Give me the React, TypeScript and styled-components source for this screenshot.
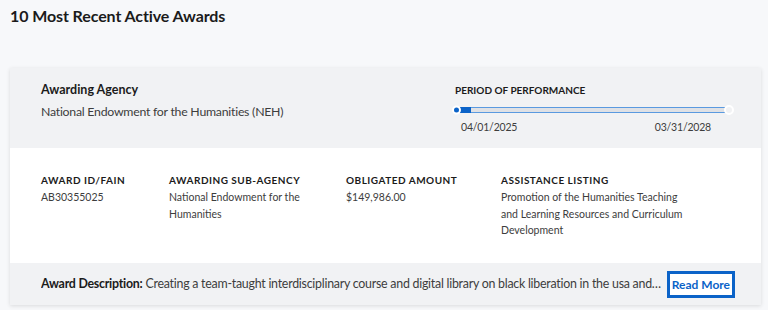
import React from 'react';
import styled, { createGlobalStyle } from 'styled-components';

const GlobalStyle = createGlobalStyle`
  body {
    margin: 0;
    background: #f7f8fa;
    font-family: 'Lato', 'Noto Sans', sans-serif;
    color: #1b1b1b;
  }
`;

const Page = styled.div`
  box-sizing: border-box;
  padding: 5px 7px 0 10px;
  width: 768px;
  height: 310px;
  overflow: hidden;
`;

const Heading = styled.h2`
  margin: 0 0 41px 0;
  line-height: 22px;
  font-size: 16px;
  font-weight: 700;
  letter-spacing: -0.1px;
  color: #1b1b1b;
`;

const Card = styled.div`
  display: flex;
  flex-direction: column;
  width: 751px;
  background: #f1f2f4;
  box-shadow: 0 1px 4px rgba(0, 0, 0, 0.12);
`;

const Top = styled.div`
  display: flex;
  justify-content: space-between;
  box-sizing: border-box;
  height: 80px;
  padding: 14px 32px 0 31px;
`;

const Label = styled.div`
  margin-bottom: 5px;
  line-height: 16px;
  font-size: 12.5px;
  font-weight: 700;
  color: #1b1b1b;
`;

const Text = styled.div`
  line-height: 18px;
  font-size: 12.3px;
  letter-spacing: -0.25px;
  color: #3d3d3d;
`;

const Period = styled.div`
  display: flex;
  flex-direction: column;
  width: 274px;
  padding-top: 1px;
`;

const SmallCaps = styled.div<{ $spaced?: boolean }>`
  line-height: 14px;
  font-size: 10px;
  font-weight: 700;
  text-transform: uppercase;
  letter-spacing: ${(p) => (p.$spaced ? '0.5px' : '0')};
  color: #1b1b1b;
`;

const Track = styled.div`
  position: relative;
  margin: 10px 0 0 0;
  height: 6px;
  border-top: 1px solid #5a9ae0;
  border-bottom: 1px solid #5a9ae0;
  background: #dfe1e5;
  box-sizing: border-box;
`;

const Fill = styled.div`
  position: absolute;
  left: 4px;
  top: -1px;
  width: 12px;
  height: 6px;
  background: #0b63c8;
`;

const Dot = styled.div<{ $end?: boolean }>`
  position: absolute;
  top: 50%;
  ${(p) => (p.$end ? 'right: -5px;' : 'left: -3px;')}
  width: ${(p) => (p.$end ? '6px' : '5px')};
  height: ${(p) => (p.$end ? '6px' : '5px')};
  transform: translateY(-50%);
  border-radius: 50%;
  background: ${(p) => (p.$end ? '#f1f2f4' : '#0b63c8')};
  border: 2px solid #ffffff;
`;

const Dates = styled.div`
  display: flex;
  justify-content: space-between;
  margin: 7px 0 0 6px;
  padding-right: 18px;
  line-height: 14px;
  font-size: 10.5px;
  letter-spacing: -0.2px;
  color: #3d3d3d;
`;

const Middle = styled.div`
  display: flex;
  box-sizing: border-box;
  height: 115px;
  padding: 25px 0 0 31px;
  background: #ffffff;
`;

const Column = styled.div<{ $w: number }>`
  display: flex;
  flex-direction: column;
  width: ${(p) => p.$w}px;
  gap: 2px;
`;

const Value = styled.div<{ $w?: number }>`
  max-width: ${(p) => (p.$w ? `${p.$w}px` : 'none')};
  line-height: 16.5px;
  font-size: 10.5px;
  color: #3d3d3d;
`;

const Bottom = styled.div`
  display: flex;
  align-items: center;
  box-sizing: border-box;
  height: 42px;
  padding: 0 26px 0 31px;
`;

const Description = styled.div`
  flex: 1;
  overflow: hidden;
  white-space: nowrap;
  text-overflow: ellipsis;
  line-height: 18px;
  font-size: 12.4px;
  letter-spacing: -0.25px;
  color: #3d3d3d;

  strong {
    color: #1b1b1b;
    font-weight: 700;
  }
`;

const ReadMore = styled.button`
  margin-left: 2px;
  padding: 3px 2px;
  border: 3px solid #0b63c8;
  background: #ffffff;
  line-height: 15px;
  font-family: inherit;
  font-size: 12px;
  font-weight: 700;
  color: #0b63c8;
  cursor: pointer;
`;

export default function App() {
  return (
    <Page>
      <GlobalStyle />
      <Heading>10 Most Recent Active Awards</Heading>
      <Card>
        <Top>
          <div>
            <Label>Awarding Agency</Label>
            <Text>National Endowment for the Humanities (NEH)</Text>
          </div>
          <Period>
            <SmallCaps>Period of Performance</SmallCaps>
            <Track>
              <Fill />
              <Dot />
              <Dot $end />
            </Track>
            <Dates>
              <span>04/01/2025</span>
              <span>03/31/2028</span>
            </Dates>
          </Period>
        </Top>
        <Middle>
          <Column $w={128}>
            <SmallCaps $spaced>Award ID/FAIN</SmallCaps>
            <Value>AB30355025</Value>
          </Column>
          <Column $w={177}>
            <SmallCaps $spaced>Awarding Sub-Agency</SmallCaps>
            <Value $w={140}>National Endowment for the Humanities</Value>
          </Column>
          <Column $w={155}>
            <SmallCaps $spaced>Obligated Amount</SmallCaps>
            <Value>$149,986.00</Value>
          </Column>
          <Column $w={200}>
            <SmallCaps $spaced>Assistance Listing</SmallCaps>
            <Value $w={192}>
              Promotion of the Humanities Teaching and Learning Resources and Curriculum Development
            </Value>
          </Column>
        </Middle>
        <Bottom>
          <Description>
            <strong>Award Description:</strong> Creating a team-taught interdisciplinary course and
            digital library on black liberation in the usa and…
          </Description>
          <ReadMore>Read More</ReadMore>
        </Bottom>
      </Card>
    </Page>
  );
}
